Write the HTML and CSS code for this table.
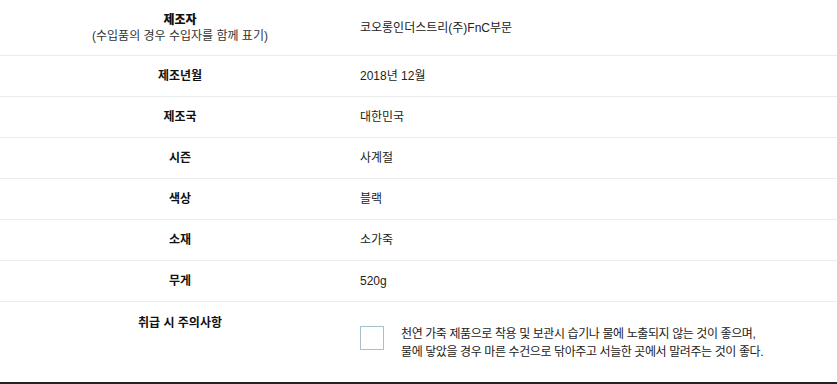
FILE: index.html
```html
<!DOCTYPE html>
<html lang="ko">
<head>
<meta charset="utf-8">
<link rel="stylesheet" href="styles.css">
</head>
<body>
<table class="spec">
  <tbody>
    <tr class="row-first">
      <th><strong>제조자</strong><br><span class="sub">(수입품의 경우 수입자를 함께 표기)</span></th>
      <td>코오롱인더스트리(주)FnC부문</td>
    </tr>
    <tr><th>제조년월</th><td>2018년 12월</td></tr>
    <tr><th>제조국</th><td>대한민국</td></tr>
    <tr><th>시즌</th><td>사계절</td></tr>
    <tr><th>색상</th><td>블랙</td></tr>
    <tr><th>소재</th><td>소가죽</td></tr>
    <tr><th>무게</th><td>520g</td></tr>
    <tr class="row-last">
      <th>취급 시 주의사항</th>
      <td>
        <div class="care">
          <span class="care-box"></span>
          <p class="care-text">천연 가죽 제품으로 착용 및 보관시 습기나 물에 노출되지 않는 것이 좋으며,<br>물에 닿았을 경우 마른 수건으로 닦아주고 서늘한 곳에서 말려주는 것이 좋다.</p>
        </div>
      </td>
    </tr>
  </tbody>
</table>
</body>
</html>
```

FILE: styles.css
```css
html, body {
  margin: 0;
  padding: 0;
  background: #fff;
}
body {
  font-family: "Liberation Sans", "Noto Sans CJK KR", sans-serif;
  font-size: 12px;
  color: #222;
}
.spec {
  width: 837px;
  border-collapse: collapse;
  border-bottom: 2px solid #222;
}
.spec th,
.spec td {
  height: 40px;
  padding: 0;
  border-bottom: 1px solid #ebebeb;
  vertical-align: middle;
  line-height: 16px;
}
.spec th {
  width: 360px;
  text-align: center;
  font-weight: bold;
  color: #111;
}
.spec td {
  text-align: left;
}
.spec .row-first th,
.spec .row-first td {
  height: 55px;
}
.sub {
  font-weight: normal;
  color: #333;
}
.spec .row-last th,
.spec .row-last td {
  height: 80px;
  border-bottom: none;
}
.spec .row-last th {
  vertical-align: top;
  padding-top: 13px;
  height: 67px;
}
.care {
  display: flex;
  align-items: flex-start;
  gap: 17px;
  padding-top: 2px;
}
.care-box {
  width: 22px;
  height: 22px;
  margin-top: 1px;
  border: 1px solid #a6c0cc;
  flex: none;
}
.care-text {
  margin: 0;
  line-height: 18.5px;
  letter-spacing: -0.4px;
}
```
